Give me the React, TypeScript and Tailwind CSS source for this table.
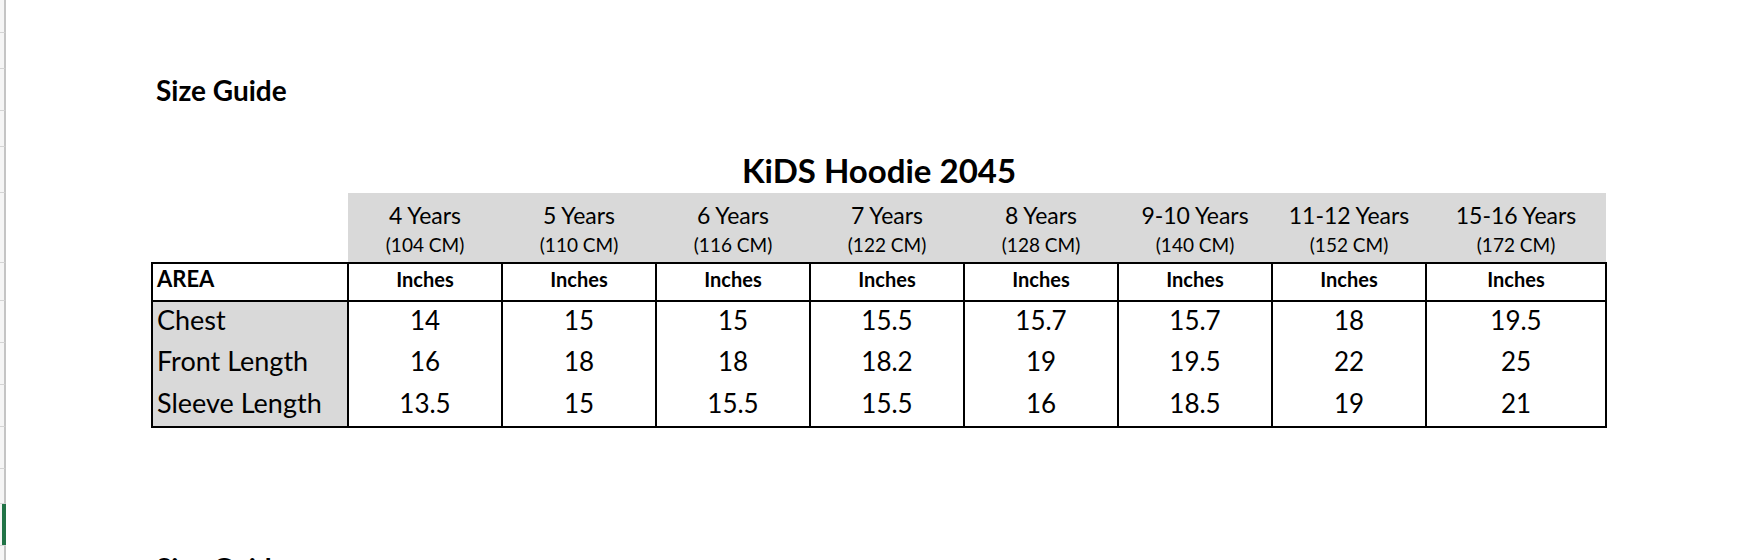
import React from "react";

const sizes = [
  { years: "4 Years", cm: "(104 CM)" },
  { years: "5 Years", cm: "(110 CM)" },
  { years: "6 Years", cm: "(116 CM)" },
  { years: "7 Years", cm: "(122 CM)" },
  { years: "8 Years", cm: "(128 CM)" },
  { years: "9-10 Years", cm: "(140 CM)" },
  { years: "11-12 Years", cm: "(152 CM)" },
  { years: "15-16 Years", cm: "(172 CM)" },
];

const measurements = [
  { area: "Chest", values: ["14", "15", "15", "15.5", "15.7", "15.7", "18", "19.5"] },
  { area: "Front Length", values: ["16", "18", "18", "18.2", "19", "19.5", "22", "25"] },
  { area: "Sleeve Length", values: ["13.5", "15", "15.5", "15.5", "16", "18.5", "19", "21"] },
];

// excel row header ticks down the left edge
const gutterRows = [33, 36, 42, 36, 46, 70, 38, 42, 42, 42, 42, 35, 42, 30];
const SELECTED_ROW = 12;

const calibri = "font-['Lato','Liberation_Sans',sans-serif]";
const avenir = "font-['Lato','Liberation_Sans',sans-serif]";

const Gutter: React.FC = () => (
  <div className="flex w-[6px] shrink-0 flex-col bg-[#f5f5f5]">
    {gutterRows.map((h, i) => (
      <div
        key={i}
        className={`flex shrink-0 justify-end border-b border-[#d4d4d4] ${
          i === SELECTED_ROW ? "border-r-0" : "border-r-2 border-r-[#c4c4c4]"
        }`}
        style={{ height: h }}
      >
        {i === SELECTED_ROW && <div className="h-full w-[4px] bg-[#217346]" />}
      </div>
    ))}
  </div>
);

const SizeTable: React.FC = () => (
  <table className="table-fixed border-collapse text-black">
    <colgroup>
      <col className="w-[196px]" />
      {sizes.slice(0, 7).map((s) => (
        <col key={s.years} className="w-[154px]" />
      ))}
      <col className="w-[180px]" />
    </colgroup>
    <tbody>
      <tr className="h-[70px]">
        <td className="p-0" />
        {sizes.map((s) => (
          <td key={s.years} className={`bg-[#d9d9d9] p-0 pt-[7px] text-center align-top ${calibri}`}>
            <div className="text-[23px] leading-[30px]">{s.years}</div>
            <div className="mt-[2px] text-[19px] leading-[26px]">{s.cm}</div>
          </td>
        ))}
      </tr>
      <tr className="h-[38px]">
        <td
          className={`border-2 border-black px-[4px] pt-0 pb-[6px] text-left text-[22px] font-bold leading-[28px] ${avenir}`}
        >
          AREA
        </td>
        {sizes.map((s) => (
          <td
            key={s.years}
            className={`border-2 border-black px-0 pt-0 pb-[6px] text-center text-[20px] font-bold leading-[28px] ${avenir}`}
          >
            Inches
          </td>
        ))}
      </tr>
      {measurements.map((row, r) => {
        const last = r === measurements.length - 1;
        return (
          <tr key={row.area} className="h-[42px]">
            <td
              className={`border-x-2 border-black bg-[#d9d9d9] px-[4px] pt-0 pb-[6px] text-left text-[27px] leading-[34px] ${avenir} ${
                last ? "border-b-2" : ""
              }`}
            >
              {row.area}
            </td>
            {row.values.map((v, c) => (
              <td
                key={c}
                className={`border-x-2 border-black px-0 pt-0 pb-[6px] text-center text-[26px] leading-[34px] ${avenir} ${
                  last ? "border-b-2" : ""
                }`}
              >
                {v}
              </td>
            ))}
          </tr>
        );
      })}
    </tbody>
  </table>
);

export default function App() {
  return (
    <div className="flex h-[560px] w-full overflow-hidden bg-white">
      <Gutter />
      <div className="ml-[145px] flex flex-col text-black">
        <div className="h-[69px] shrink-0" />
        <div className={`h-[42px] shrink-0 pl-[5px] text-[28px] font-bold leading-[42px] ${calibri}`}>
          Size Guide
        </div>
        <div className="h-[36px] shrink-0" />
        <div className={`h-[46px] shrink-0 text-center text-[33px] font-bold leading-[46px] ${calibri}`}>
          KiDS Hoodie 2045
        </div>
        <SizeTable />
        <div className="h-[119px] shrink-0" />
        <div className={`h-[42px] shrink-0 pl-[5px] text-[28px] font-bold leading-[42px] ${calibri}`}>
          Size Guide
        </div>
      </div>
    </div>
  );
}
